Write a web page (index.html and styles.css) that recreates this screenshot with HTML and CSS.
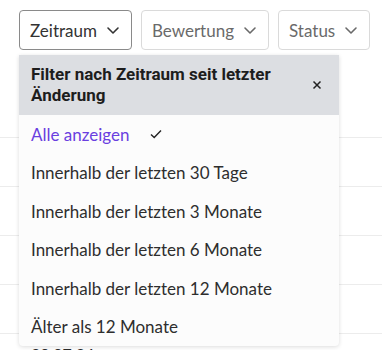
FILE: index.html
```html
<!DOCTYPE html>
<html lang="de">
<head>
<meta charset="utf-8">
<link rel="stylesheet" href="styles.css">
</head>
<body>
<div class="page">
  <div class="filters">
    <button class="filter active">Zeitraum <svg class="chev" viewBox="0 0 16 16" width="16" height="16"><path d="M3 6l5 5 5-5" fill="none" stroke="currentColor" stroke-width="1.6" stroke-linecap="round" stroke-linejoin="round"/></svg></button>
    <button class="filter">Bewertung <svg class="chev" viewBox="0 0 16 16" width="16" height="16"><path d="M3 6l5 5 5-5" fill="none" stroke="currentColor" stroke-width="1.6" stroke-linecap="round" stroke-linejoin="round"/></svg></button>
    <button class="filter">Status <svg class="chev" viewBox="0 0 16 16" width="16" height="16"><path d="M3 6l5 5 5-5" fill="none" stroke="currentColor" stroke-width="1.6" stroke-linecap="round" stroke-linejoin="round"/></svg></button>
  </div>
  <div class="table">
    <div class="row"></div>
    <div class="row"></div>
    <div class="row"></div>
    <div class="row"></div>
    <div class="row"></div>
    <div class="row last"><span class="date">30.07.24</span></div>
  </div>
  <div class="menu">
    <div class="menu-head">
      <span class="title">Filter nach Zeitraum seit letzter Änderung</span>
      <svg class="close" viewBox="0 0 10 10" width="10" height="10"><path d="M1.5 1.5l7 7M8.5 1.5l-7 7" stroke="#222" stroke-width="1.5"/></svg>
    </div>
    <ul class="options">
      <li class="opt selected">Alle anzeigen <svg class="check" viewBox="0 0 12 10" width="12" height="10"><path d="M1 5.5l3.2 3L11 1.5" fill="none" stroke="#222" stroke-width="1.4"/></svg></li>
      <li class="opt">Innerhalb der letzten 30 Tage</li>
      <li class="opt">Innerhalb der letzten 3 Monate</li>
      <li class="opt">Innerhalb der letzten 6 Monate</li>
      <li class="opt">Innerhalb der letzten 12 Monate</li>
      <li class="opt">Älter als 12 Monate</li>
    </ul>
  </div>
</div>
</body>
</html>
```
FILE: styles.css
```css
* { box-sizing: border-box; }
html, body { margin: 0; padding: 0; background: #fff; }
body { font-family: "Lato", "Noto Sans", sans-serif; color: #2b2b2b; }
.page { position: relative; width: 382px; height: 350px; overflow: hidden; }
.filters { display: flex; gap: 9px; padding: 10px 0 0 19px; }
.filter {
  display: flex; align-items: center; gap: 8px;
  height: 40px; padding: 0 10px 0 10px;
  background: #fff; border: 1px solid #dadada; border-radius: 4px;
  font: 17px "Lato", "Noto Sans", sans-serif; color: #6a6a6a;
}
.filter.active { border-color: #8a8a8a; color: #333; }
.chev { display: block; }
.table { margin-top: 39px; }
.row { height: 49px; border-bottom: 1px solid #ececec; }
.row.last { border-bottom: none; padding: 10px 0 0 31px; font-size: 16px; }
.menu {
  position: absolute; left: 19px; top: 55px; width: 320px;
  background: #fcfcfc; border-radius: 0 0 4px 4px;
  box-shadow: 0 1px 4px rgba(0,0,0,0.14);
  overflow: hidden;
}
.menu-head {
  display: flex; align-items: center; justify-content: space-between;
  background: #dcdee2; padding: 9px 17px 9px 12px; min-height: 60px;
}
.title { font-family: "Roboto", "Lato", sans-serif; font-weight: 700; font-size: 17px; line-height: 21px; color: #1d1d1d; width: 265px; }
.close { display: block; }
.options { list-style: none; margin: 0; padding: 0; }
.opt { display: flex; align-items: center; height: 38.5px; padding-left: 12px; font-size: 17px; color: #2e2e2e; }
.opt.selected { color: #6a3fe0; gap: 20px; }
.check { display: block; }
```
